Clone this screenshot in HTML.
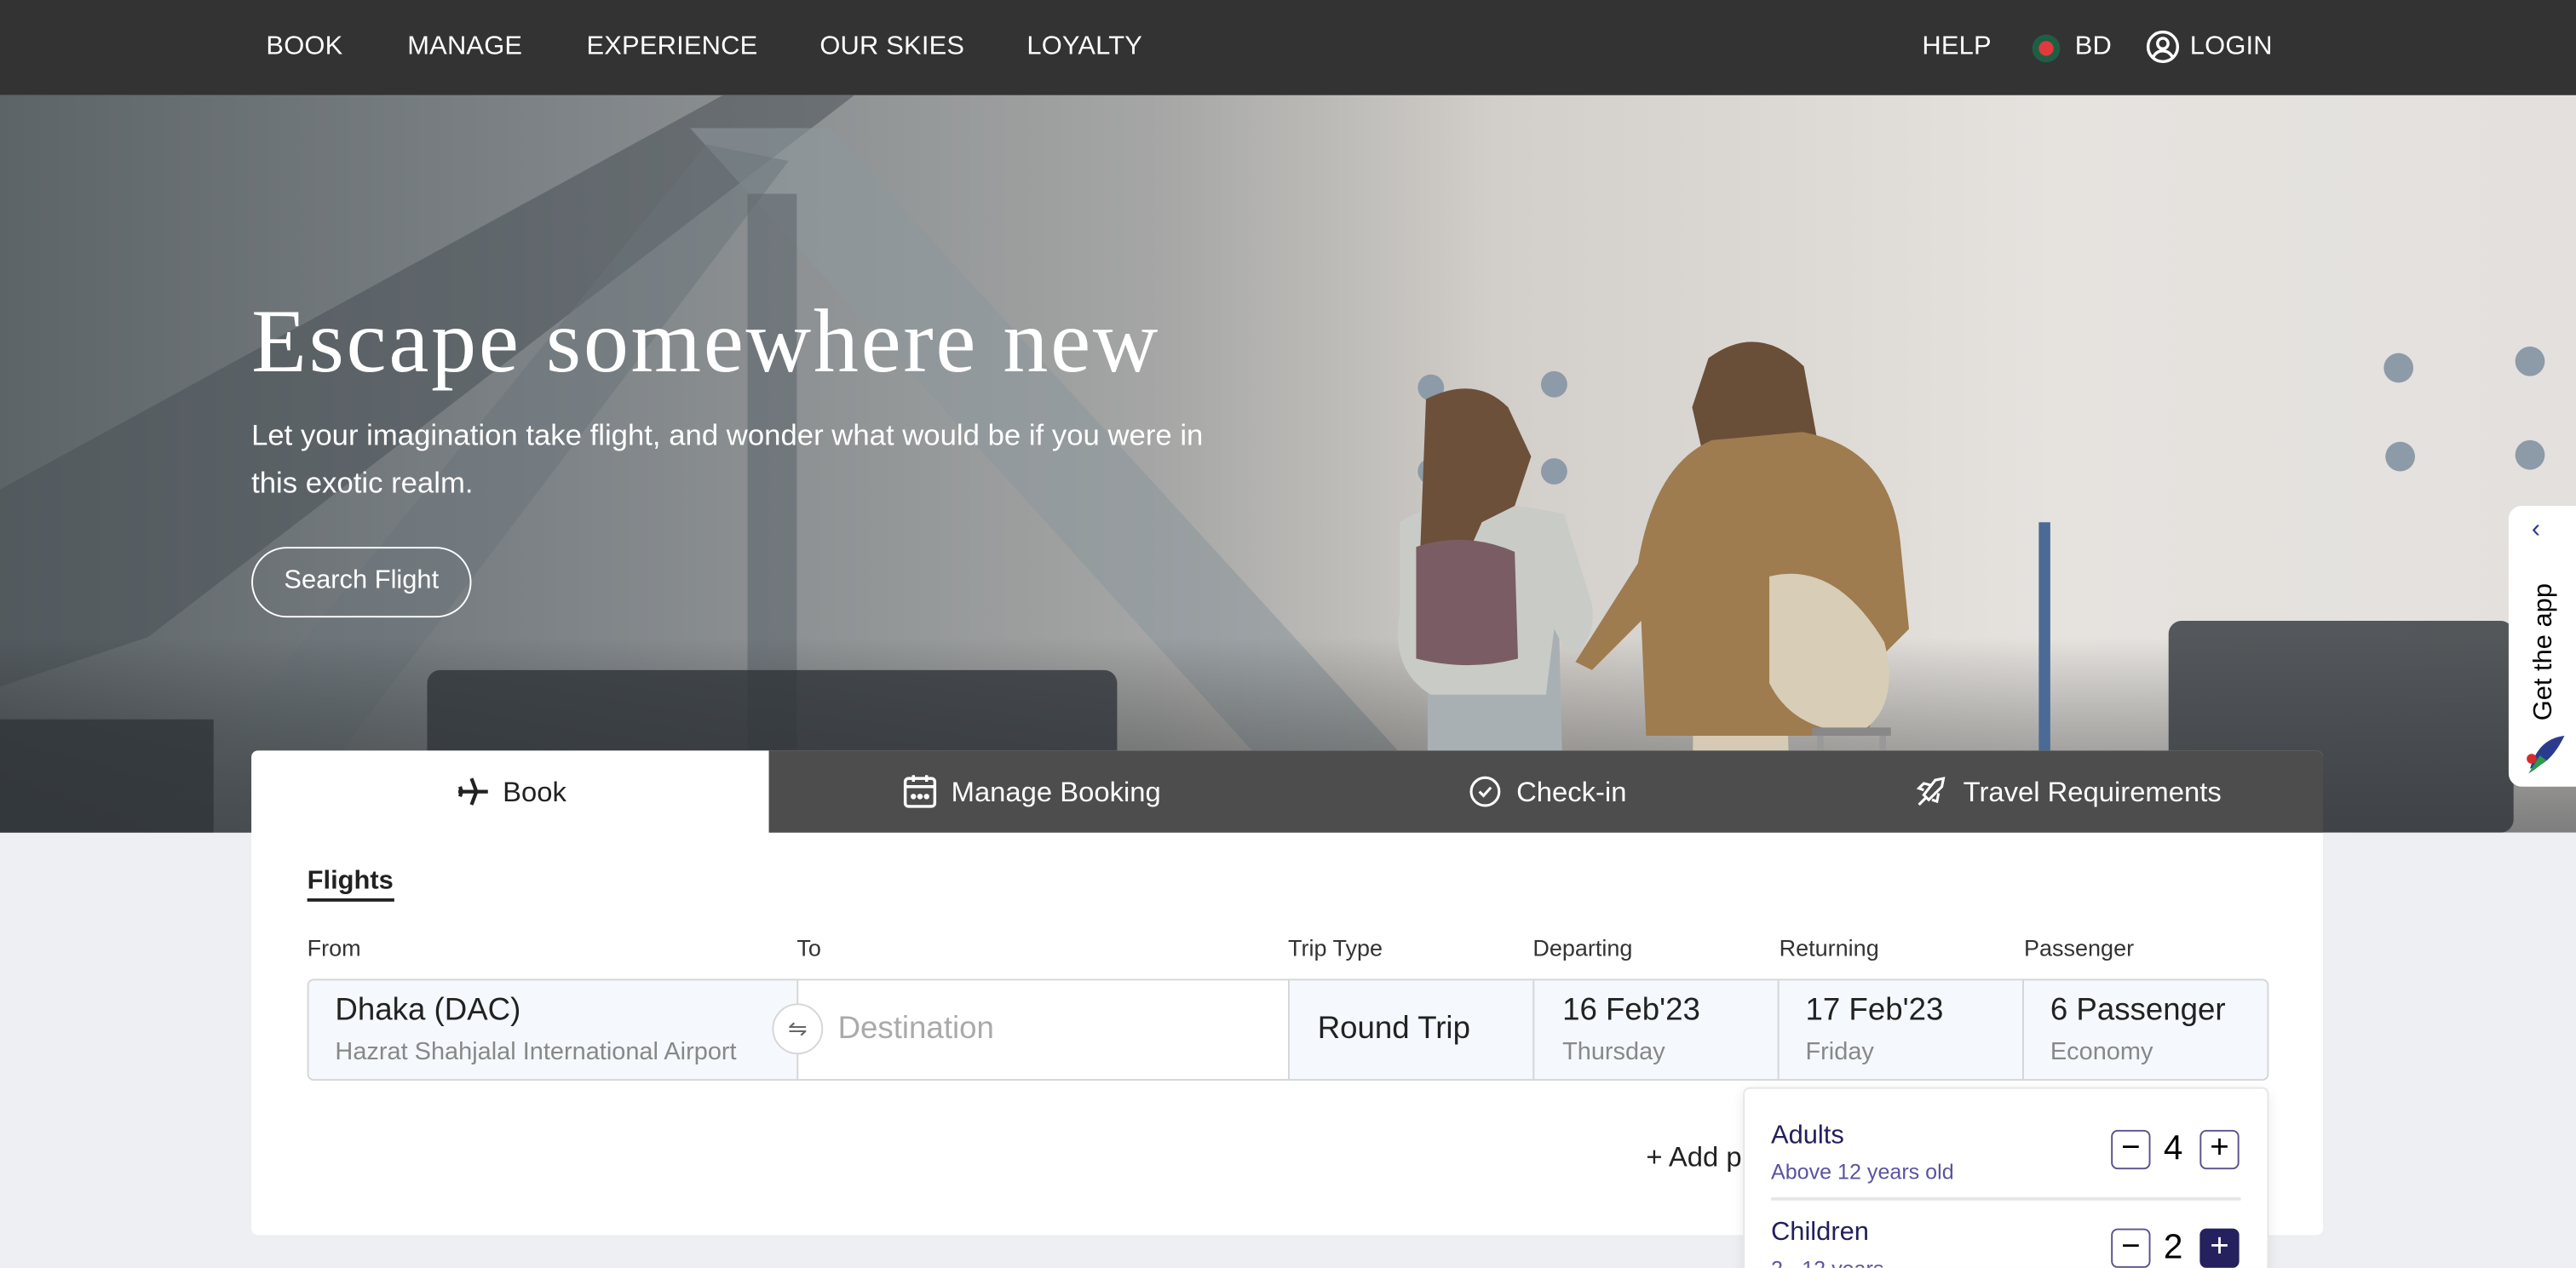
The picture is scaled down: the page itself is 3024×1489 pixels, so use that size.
<!DOCTYPE html>
<html><head><meta charset="utf-8">
<style>
*{margin:0;padding:0;box-sizing:border-box}
html,body{width:3024px;height:1488px;overflow:hidden;background:#eeeff3}
#w{position:absolute;left:0;top:0;width:1568px;height:772px;transform:scale(1.92857);transform-origin:0 0;font-family:"Liberation Sans",Arial,sans-serif;background:#eeeff3;overflow:hidden}
.abs{position:absolute}
.nav{left:0;top:0;width:1568px;height:58px;background:#333}
.nav span{position:absolute;top:20px;color:#fff;font-size:16px;letter-spacing:.1px}
.hero{left:0;top:58px;width:1568px;height:449px;overflow:hidden;
background:linear-gradient(90deg,#5d6467 0%,#7b8185 20%,#a5a6a5 45%,#d2cec9 58%,#e6e3df 80%,#e3e0dd 100%)}
.card{left:153px;top:457px;width:1261px;height:295px;background:#fff;border-radius:4px}
.tabs{left:468px;top:457px;width:946px;height:50px;background:#4d4d4d;border-top-right-radius:4px}
.tab{position:absolute;top:473px;font-size:17px;color:#fff}
.lbl{position:absolute;top:569px;font-size:14px;color:#333}
.cell{position:absolute;top:596px;height:62px;border:1px solid #d6d6d6}
.big{position:absolute;font-size:19px;color:#222}
.sm{position:absolute;font-size:14px;color:#888}
.btn{position:absolute;width:24px;height:24px;border:1.5px solid #58528f;border-radius:4px;color:#000;font-size:20px;line-height:20px;text-align:center}
</style></head><body><div id="w">
<div class="abs nav">
<span style="left:162px">BOOK</span><span style="left:248px">MANAGE</span><span style="left:357px">EXPERIENCE</span><span style="left:499px">OUR SKIES</span><span style="left:625px">LOYALTY</span>
<span style="left:1170px">HELP</span>
<div class="abs" style="left:1237px;top:21px;width:17px;height:17px;border-radius:50%;background:#1f5e43"><div class="abs" style="left:4px;top:4px;width:9px;height:9px;border-radius:50%;background:#e03a3e"></div></div>
<span style="left:1263px">BD</span>
<svg class="abs" style="left:1306px;top:18px" width="21" height="21" viewBox="0 0 21 21" fill="none" stroke="#fff" stroke-width="1.8"><circle cx="10.5" cy="10.5" r="9"/><circle cx="10.5" cy="8.5" r="3.2"/><path d="M4.5 17c1.5-3 3.5-4 6-4s4.5 1 6 4"/></svg>
<span style="left:1333px">LOGIN</span>
</div>
<div class="abs hero">
<svg class="abs" style="left:0;top:0" width="1568" height="449">
<defs><linearGradient id="f" x1="0" y1="0" x2="0" y2="1"><stop offset="0" stop-color="#000" stop-opacity="0"/><stop offset="1" stop-color="#2a2d30" stop-opacity=".55"/></linearGradient></defs>
<polygon points="0,240 440,0 520,0 90,330 0,360" fill="#4b5257" opacity=".55"/>
<polygon points="420,20 505,20 870,420 790,430" fill="#8e979c" opacity=".6"/>
<polygon points="430,30 480,40 170,449 90,449" fill="#69737a" opacity=".5"/>
<rect x="455" y="60" width="30" height="340" fill="#5f686e" opacity=".6"/>
<rect x="0" y="330" width="1568" height="119" fill="url(#f)"/>
<g fill="#2f3439" opacity=".8"><rect x="260" y="350" width="420" height="99" rx="8"/><rect x="1320" y="320" width="210" height="129" rx="8"/><rect x="0" y="380" width="130" height="69"/></g>
<g fill="#8d9aa8"><circle cx="871" cy="178" r="8"/><circle cx="946" cy="176" r="8"/><circle cx="1460" cy="166" r="9"/><circle cx="1540" cy="162" r="9"/><circle cx="1461" cy="220" r="9"/><circle cx="1540" cy="219" r="9"/><circle cx="946" cy="229" r="8"/><circle cx="871" cy="229" r="8"/></g>
<rect x="1241" y="260" width="7" height="190" fill="#4b6a95"/>
<path d="M869 325 h80 l3 124 h-83z" fill="#a9b0b4"/>
<path d="M852 260 q30-20 100 -5 l17 55 q3 25-15 30 l-8-15 l-5 40 h-70 q-25-15-19-50z" fill="#c9cbc6"/>
<path d="M868 185 q30-15 50 5 l14 30 l-10 30 l-20 10 l-20 45 l-18-15z" fill="#6d5039"/>
<path d="M862 275 q30-10 60 3 l2 65 q-30 8-62 0z" fill="#7a5d64"/>
<path d="M1031 339 h56 l3 110 h-60z" fill="#d6cab5"/>
<path d="M1040 160 q30-22 58 5 l10 55 l-70 5 l-8-35z" fill="#6a4f38"/>
<path d="M997 285 q10-60 45-75 l55-5 q55 10 60 70 l5 50 l-15 15 l-10 50 l-135 0 l-3-70 l-30 30 l-10-5 z" fill="#9e7c4f"/>
<path d="M1077 293 q40 -10 70 40 q10 40-15 55 q-40 0-55-30z" fill="#d8cdb6"/>
<rect x="1103" y="385" width="48" height="5" fill="#888"/><rect x="1106" y="390" width="4" height="59" fill="#999"/><rect x="1144" y="390" width="4" height="59" fill="#999"/>
</svg>
<div class="abs" style="left:153px;top:118px;font-family:'Liberation Serif',serif;font-size:55px;color:#fff;letter-spacing:1.4px">Escape somewhere new</div>
<div class="abs" style="left:153px;top:193px;width:608px;font-size:18px;line-height:29px;color:#fff">Let your imagination take flight, and wonder what would be if you were in this exotic realm.</div>
<div class="abs" style="left:153px;top:275px;width:134px;height:43px;border:1.5px solid #fff;border-radius:22px;color:#fff;font-size:16px;line-height:40px;text-align:center">Search Flight</div>
</div>
<div class="abs" style="left:1527px;top:308px;width:45px;height:171px;background:#fff;border-radius:8px 0 0 8px">
<div class="abs" style="left:14px;top:6px;color:#2a3b8f;font-size:16px">‹</div>
<div class="abs" style="left:-28px;top:80px;width:100px;transform:rotate(-90deg);font-size:16px;color:#000;text-align:center">Get the app</div>
<svg class="abs" style="left:9px;top:138px" width="26" height="26" viewBox="0 0 26 26"><path d="M4 22 C8 8 16 3 25 2 C20 12 14 20 4 22z" fill="#2a3b8f"/><path d="M3 25 L10 14 L14 17 C10 20 7 23 3 25z" fill="#2a9a4a"/><circle cx="5" cy="16" r="3" fill="#d52b2b"/></svg>
</div>
<div class="abs card"></div>
<div class="abs tabs"></div>
<svg class="abs" style="left:278px;top:473px" width="20" height="18" viewBox="0 0 20 18"><path d="M1 9 H19 M9 1 L12 9 L9 17 M2 6 L3 9 L2 12" stroke="#222" stroke-width="2.2" fill="none"/></svg>
<div class="tab" style="left:306px;color:#222">Book</div>
<svg class="abs" style="left:549px;top:471px" width="22" height="22" viewBox="0 0 22 22" fill="none" stroke="#fff" stroke-width="1.8"><rect x="2" y="3" width="18" height="17" rx="2"/><path d="M2 8 H20 M7 1 V5 M15 1 V5"/><circle cx="7" cy="14" r=".8" fill="#fff"/><circle cx="11" cy="14" r=".8" fill="#fff"/><circle cx="15" cy="14" r=".8" fill="#fff"/></svg>
<div class="tab" style="left:579px">Manage Booking</div>
<svg class="abs" style="left:894px;top:472px" width="20" height="20" viewBox="0 0 20 20" fill="none" stroke="#fff" stroke-width="1.6"><circle cx="10" cy="10" r="8.5"/><path d="M6.5 10 L9 12.5 L13.5 7.5"/></svg>
<div class="tab" style="left:923px">Check-in</div>
<svg class="abs" style="left:1165px;top:472px" width="21" height="21" viewBox="0 0 21 21" fill="none" stroke="#fff" stroke-width="1.6"><path d="M3 18 L8 13 M13 3 L18 2 L17 7 L9 15 L6 12z M6 9 L3 8 L6 5 L10 6 M15 11 L14 16 L11 15"/></svg>
<div class="tab" style="left:1195px">Travel Requirements</div>
<div class="abs" style="left:187px;top:528px;font-size:16px;font-weight:bold;color:#222">Flights</div>
<div class="abs" style="left:187px;top:547px;width:53px;height:2px;background:#222"></div>
<div class="lbl" style="left:187px">From</div><div class="lbl" style="left:485px">To</div><div class="lbl" style="left:784px">Trip Type</div><div class="lbl" style="left:933px">Departing</div><div class="lbl" style="left:1083px">Returning</div><div class="lbl" style="left:1232px">Passenger</div>
<div class="cell" style="left:187px;width:299px;background:#f5f8fd;border-radius:4px 0 0 4px"></div>
<div class="cell" style="left:485px;width:300px;background:#fff"></div>
<div class="cell" style="left:784px;width:150px;background:#f5f8fd"></div>
<div class="cell" style="left:933px;width:150px;background:#f5f8fd"></div>
<div class="cell" style="left:1082px;width:150px;background:#f5f8fd"></div>
<div class="cell" style="left:1231px;width:150px;background:#f5f8fd;border-radius:0 4px 4px 0"></div>
<div class="big" style="left:204px;top:605px">Dhaka (DAC)</div>
<div class="sm" style="left:204px;top:632px;font-size:15px">Hazrat Shahjalal International Airport</div>
<div class="abs" style="left:470px;top:611px;width:31px;height:31px;border-radius:50%;background:#fff;border:1px solid #d6d6d6;color:#666;font-size:14px;text-align:center;line-height:29px">⇋</div>
<div class="big" style="left:510px;top:616px;color:#aaa">Destination</div>
<div class="big" style="left:802px;top:616px">Round Trip</div>
<div class="big" style="left:951px;top:605px">16 Feb'23</div><div class="sm" style="left:951px;top:632px;font-size:15px">Thursday</div>
<div class="big" style="left:1099px;top:605px">17 Feb'23</div><div class="sm" style="left:1099px;top:632px;font-size:15px">Friday</div>
<div class="big" style="left:1248px;top:605px">6 Passenger</div><div class="sm" style="left:1248px;top:632px;font-size:15px">Economy</div>
<div class="abs" style="left:1002px;top:695px;font-size:17px;color:#222">+ Add p</div>
<div class="abs" style="left:1061px;top:662px;width:320px;height:120px;background:#fff;border:1px solid #e6e6e6;border-radius:4px;box-shadow:0 2px 8px rgba(0,0,0,.08)"></div>
<div class="abs" style="left:1078px;top:683px;font-size:16px;color:#231f5c">Adults</div>
<div class="abs" style="left:1078px;top:706px;font-size:13px;color:#5b53a0">Above 12 years old</div>
<div class="btn" style="left:1285px;top:688px">−</div><div class="abs" style="left:1317px;top:688px;font-size:21px">4</div><div class="btn" style="left:1339px;top:688px">+</div>
<div class="abs" style="left:1078px;top:729px;width:286px;height:2px;background:#e6e6e6"></div>
<div class="abs" style="left:1078px;top:742px;font-size:16px;color:#231f5c">Children</div>
<div class="abs" style="left:1078px;top:765px;font-size:13px;color:#5b53a0">2 - 12 years</div>
<div class="btn" style="left:1285px;top:748px">−</div><div class="abs" style="left:1317px;top:748px;font-size:21px">2</div><div class="btn" style="left:1339px;top:748px;background:#25215e;border-color:#25215e;color:#fff">+</div>
</div></body></html>
